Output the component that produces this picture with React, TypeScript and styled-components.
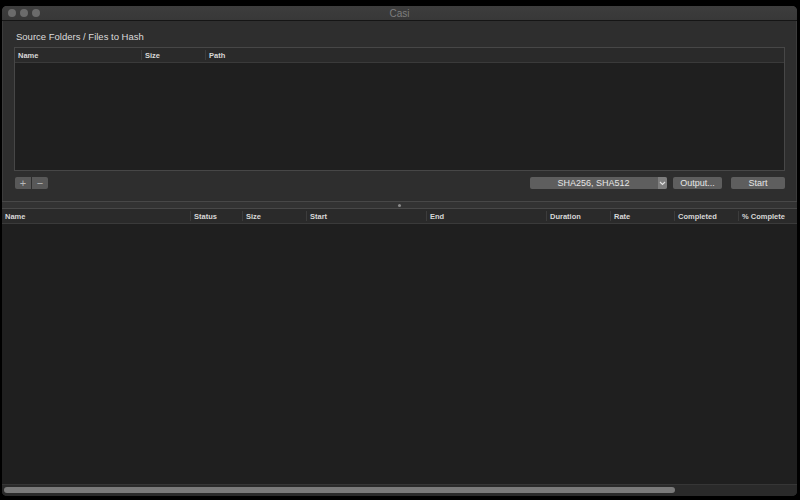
import React from 'react';
import styled, { createGlobalStyle } from 'styled-components';

const GlobalStyle = createGlobalStyle`
  html, body {
    margin: 0;
    padding: 0;
    background: #000;
    font-family: "Liberation Sans", Arial, sans-serif;
  }
`;

const Window = styled.div`
  margin: 6px 3px 0 2px;
  width: 795px;
  height: 490px;
  background: #2e2e2e;
  border-radius: 5px;
  overflow: hidden;
  display: flex;
  flex-direction: column;
  box-shadow: inset 0 0 0 1px #3c3c3c;
`;

const TitleBar = styled.div`
  position: relative;
  height: 14px;
  background: linear-gradient(#3d3d3d, #383838);
  border-bottom: 1px solid #151515;
  display: flex;
  align-items: center;
  justify-content: center;
  color: #7e7e7e;
  font-size: 10px;
`;

const Lights = styled.div`
  position: absolute;
  left: 6px;
  top: 3px;
  display: flex;
  gap: 4px;
`;

const Light = styled.span`
  width: 8px;
  height: 8px;
  border-radius: 50%;
  background: #6b6b6b;
`;

const TopPane = styled.div`
  height: 170px;
  padding: 10px 12px 0 12px;
  display: flex;
  flex-direction: column;
  border-bottom: 1px solid #484848;
`;

const SectionLabel = styled.div`
  color: #dcdcdc;
  font-size: 9.5px;
  padding-left: 2px;
  height: 16px;
`;

const SourceTable = styled.div`
  height: 122px;
  border: 1px solid #474747;
  background: #1f1f1f;
  display: flex;
  flex-direction: column;
`;

const HeaderRow = styled.div<{ $cols: string }>`
  display: grid;
  grid-template-columns: ${p => p.$cols};
  height: 14px;
  background: #2a2a2a;
  border-bottom: 1px solid #3a3a3a;
`;

const HeadCell = styled.div<{ $first?: boolean }>`
  color: #d8d8d8;
  font-size: 7.5px;
  font-weight: bold;
  padding: 1px 0 0 3px;
  white-space: nowrap;
  overflow: hidden;
  border-left: ${p => (p.$first ? 'none' : '1px solid #3c3c3c')};
  margin: ${p => (p.$first ? '0' : '2px 0')};
  line-height: ${p => (p.$first ? '13px' : '9px')};
`;

const Controls = styled.div`
  display: flex;
  align-items: center;
  height: 12px;
  margin-top: 6px;
`;

const Segmented = styled.div`
  display: flex;
  gap: 1px;
  margin-left: 1px;
`;

const SegButton = styled.div`
  width: 16px;
  height: 12px;
  background: #585858;
  color: #b8b8b8;
  font-size: 11px;
  line-height: 12px;
  text-align: center;
  &:first-child { border-radius: 2px 0 0 2px; }
  &:last-child { border-radius: 0 2px 2px 0; }
`;

const Spacer = styled.div`
  flex: 1;
`;

const Popup = styled.div`
  display: flex;
  width: 137px;
  height: 12px;
  border-radius: 2px;
  overflow: hidden;
  background: #5e5e5e;
`;

const PopupLabel = styled.div`
  flex: 1;
  color: #e6e6e6;
  font-size: 9px;
  line-height: 12px;
  text-align: center;
`;

const PopupArrow = styled.div`
  width: 9px;
  background: #7d7d7d;
  display: flex;
  align-items: center;
  justify-content: center;
  margin-left: 1px;
`;

const PushButton = styled.div<{ $w: number; $gap: number }>`
  width: ${p => p.$w}px;
  height: 12px;
  margin-left: ${p => p.$gap}px;
  border-radius: 2px;
  background: #5e5e5e;
  color: #e6e6e6;
  font-size: 9px;
  line-height: 12px;
  text-align: center;
`;

const Divider = styled.div`
  height: 6px;
  background: #333;
  border-bottom: 1px solid #484848;
  display: flex;
  align-items: center;
  justify-content: center;
`;

const Dimple = styled.span`
  width: 3px;
  height: 3px;
  border-radius: 50%;
  background: #8a8a8a;
`;

const BottomPane = styled.div`
  flex: 1;
  display: flex;
  flex-direction: column;
  background: #1f1f1f;
`;

const Body = styled.div`
  flex: 1;
  background: #1f1f1f;
`;

const ScrollTrack = styled.div`
  height: 9px;
  background: #2a2a2a;
  border-top: 1px solid #363636;
  padding: 2px 122px 0 2px;
`;

const ScrollThumb = styled.div`
  height: 6px;
  border-radius: 3px;
  background: #7a7a7a;
`;

const sourceCols = ['Name', 'Size', 'Path'];
const jobCols = ['Name', 'Status', 'Size', 'Start', 'End', 'Duration', 'Rate', 'Completed', '% Complete'];

const Chevron = () => (
  <svg width="7" height="5" viewBox="0 0 7 5">
    <path d="M1 1 L3.5 3.5 L6 1" stroke="#e0e0e0" strokeWidth="1.2" fill="none" />
  </svg>
);

export default function App() {
  return (
    <>
      <GlobalStyle />
      <Window>
        <TitleBar>
          <Lights>
            <Light />
            <Light />
            <Light />
          </Lights>
          Casi
        </TitleBar>
        <TopPane>
          <SectionLabel>Source Folders / Files to Hash</SectionLabel>
          <SourceTable>
            <HeaderRow $cols="126px 64px 1fr">
              {sourceCols.map((c, i) => (
                <HeadCell key={c} $first={i === 0}>{c}</HeadCell>
              ))}
            </HeaderRow>
          </SourceTable>
          <Controls>
            <Segmented>
              <SegButton>+</SegButton>
              <SegButton>−</SegButton>
            </Segmented>
            <Spacer />
            <Popup>
              <PopupLabel>SHA256, SHA512</PopupLabel>
              <PopupArrow>
                <Chevron />
              </PopupArrow>
            </Popup>
            <PushButton $w={49} $gap={6}>Output...</PushButton>
            <PushButton $w={54} $gap={9}>Start</PushButton>
          </Controls>
        </TopPane>
        <Divider>
          <Dimple />
        </Divider>
        <BottomPane>
          <HeaderRow $cols="188px 52px 64px 120px 120px 64px 64px 64px 1fr">
            {jobCols.map((c, i) => (
              <HeadCell key={c} $first={i === 0}>{c}</HeadCell>
            ))}
          </HeaderRow>
          <Body />
          <ScrollTrack>
            <ScrollThumb />
          </ScrollTrack>
        </BottomPane>
      </Window>
    </>
  );
}
